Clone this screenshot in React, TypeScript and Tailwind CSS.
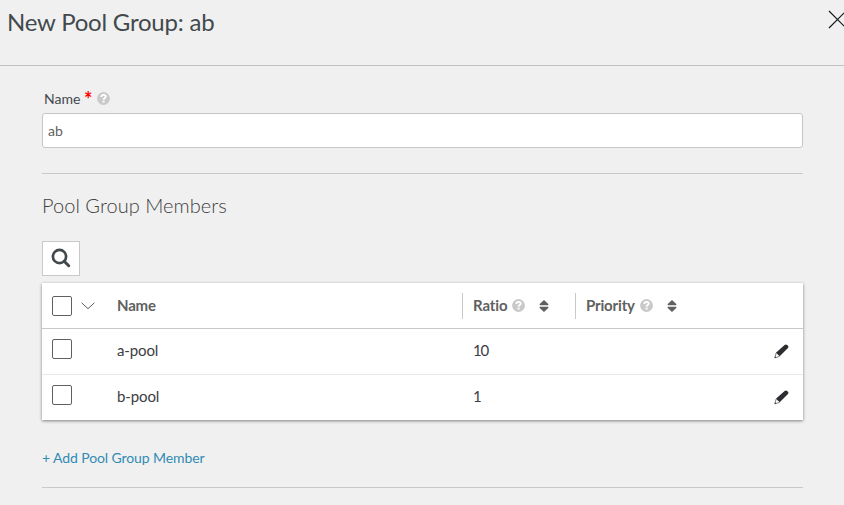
import React from "react";

function HelpIcon({ className = "" }: { className?: string }) {
  return (
    <svg className={`shrink-0 ${className}`} width="13" height="13" viewBox="0 0 13 13" aria-hidden="true">
      <circle cx="6.5" cy="6.5" r="6.4" fill="#c9c9c9" />
      <path d="M4.300 5C4.400 3.500 5.300 2.900 6.500 2.900s2.200.7 2.200 1.900C8.700 6.100 6.600 6.100 6.600 7.700" fill="none" stroke="#fff" strokeWidth="1.9" />
      <rect x="5.600" y="8.700" width="2" height="1.800" fill="#fff" />
    </svg>
  );
}

function SortIcon() {
  return (
    <svg className="shrink-0" width="10" height="12" viewBox="0 0 10 12" fill="#606060" aria-hidden="true">
      <path d="M5 0 9.300 4.100Q9.800 5.200 9 5.200H1Q.2 5.200 .7 4.100ZM5 12 9.300 7.900Q9.800 6.800 9 6.800H1Q.2 6.800 .7 7.900Z" />
    </svg>
  );
}

function PencilIcon() {
  return (
    <svg width="15" height="15" viewBox="0 0 15 15" aria-hidden="true">
      <path d="M10.600 1.100Q11.800 -.1 13.200 .9Q15.200 2.400 14 3.900L5.700 12.300 1.900 8.700Z" fill="#2c2d30" />
      <path d="M2.100 9 1 13.800 5.500 12.400" fill="none" stroke="#77736d" strokeWidth=".9" />
      <path d="M.8 12.300 .6 14.100 2.400 13.800Z" fill="#2c2d30" />
    </svg>
  );
}

function Checkbox() {
  return <span role="checkbox" aria-checked="false" className="block size-5 shrink-0 rounded-[2px] border border-[#606060] bg-white" />;
}

function MemberRow({ name, ratio, last = false }: { name: string; ratio: string; last?: boolean }) {
  return (
    <div className={`flex text-[15px] font-normal text-[#3c3d42] ${last ? "h-[45px]" : "h-[46px] border-b border-[#e8e8e8]"}`}>
      <div className="w-[75px] pt-[10px] pl-[10px]"><Checkbox /></div>
      <div className="w-[356px] pt-[10px] leading-[22px] tracking-[-0.12px]">{name}</div>
      <div className="grow pt-[10px] leading-[22px] tracking-[-1.2px]">{ratio}</div>
      <div className="w-[29px] pt-[15px]"><PencilIcon /></div>
    </div>
  );
}

export default function App() {
  return (
    <main className="h-[505px] w-[844px] overflow-hidden bg-[#f0f0f0] font-['Lato',sans-serif] text-[#42494d]">
      <header className="flex h-[66px] justify-between border-b border-[#c1c1c1] pl-[7px]">
        <h1 className="pt-[6px] text-[24px] leading-[32px] tracking-[-0.22px] whitespace-nowrap">New Pool Group: ab</h1>
        <svg className="mt-[10px] -mr-px shrink-0" width="17" height="19" viewBox="0 0 17 19" fill="none" stroke="#17191a" strokeWidth="1.2" aria-label="Close">
          <path d="M1 1 18 18M1 18 18 1" />
        </svg>
      </header>
      <section className="ml-[42px] w-[761px]">
        <label className="flex h-[47px] pt-[22px] pl-[2px] text-[14px] leading-[22px]">
          <span className="w-[40px]">Name</span>
          <span className="w-[13px] text-[20px] leading-[23px] font-bold text-[#f00]">*</span>
          <HelpIcon className="mt-[4px]" />
        </label>
        <div className="flex h-[35px] items-center rounded-[3px] border border-[#c6c6c6] bg-white pl-[5px] text-[14px] text-[#606060]">ab</div>
        <div className="mt-[25px] border-t border-[#c9c9c9]" />
        <h2 className="mt-[15px] text-[20px] leading-[32px] font-light tracking-[0.04px] text-[#414141]">Pool Group Members</h2>
        <button className="mt-[20px] flex h-[35px] w-[38px] items-center justify-center border border-[#c9c9c9] bg-white" aria-label="Search">
          <svg className="-mt-px" width="20" height="20" viewBox="0 0 20 20" fill="none" stroke="#42494d" aria-hidden="true">
            <circle cx="8.500" cy="8.500" r="6.600" strokeWidth="2.700" />
            <path d="m13.200 13.200 4.500 4.500" strokeWidth="3" strokeLinecap="round" />
          </svg>
        </button>
        <div className="mt-[7px] h-[137px] bg-white shadow-[0_1px_3px_#0007]">
          <div className="flex h-[46px] items-center border-b border-[#c9c9c9] text-[15px] leading-[22px] font-bold text-[#606060]">
            <div className="flex w-[75px] items-center gap-[9px] pl-[10px]">
              <Checkbox />
              <svg width="14" height="8" viewBox="0 0 14 8" fill="none" stroke="#606060" aria-hidden="true"><path d="m.5 .7 6.500 6 6.500-6" /></svg>
            </div>
            <div className="w-[345px] pb-[2px] tracking-[-0.2px]">Name</div>
            <div className="flex h-[26px] w-[113px] items-center border-l border-[#c9c9c9] pl-[10px]">
              <span className="w-[39px] pb-[2px] tracking-[-0.1px]">Ratio</span><HelpIcon className="mr-[14px]" /><SortIcon />
            </div>
            <div className="flex h-[26px] items-center border-l border-[#c9c9c9] pl-[10px]">
              <span className="w-[54px] pb-[2px] tracking-[-0.15px]">Priority</span><HelpIcon className="mr-[14px]" /><SortIcon />
            </div>
          </div>
          <MemberRow name="a-pool" ratio="10" />
          <MemberRow name="b-pool" ratio="1" last />
        </div>
        <button className="mt-[27px] block h-[22px] text-[14px] leading-[22px] tracking-[-0.1px] whitespace-nowrap text-[#318bb4]">+ Add Pool Group Member</button>
        <div className="mt-[18px] border-t border-[#c9c9c9]" />
      </section>
    </main>
  );
}
